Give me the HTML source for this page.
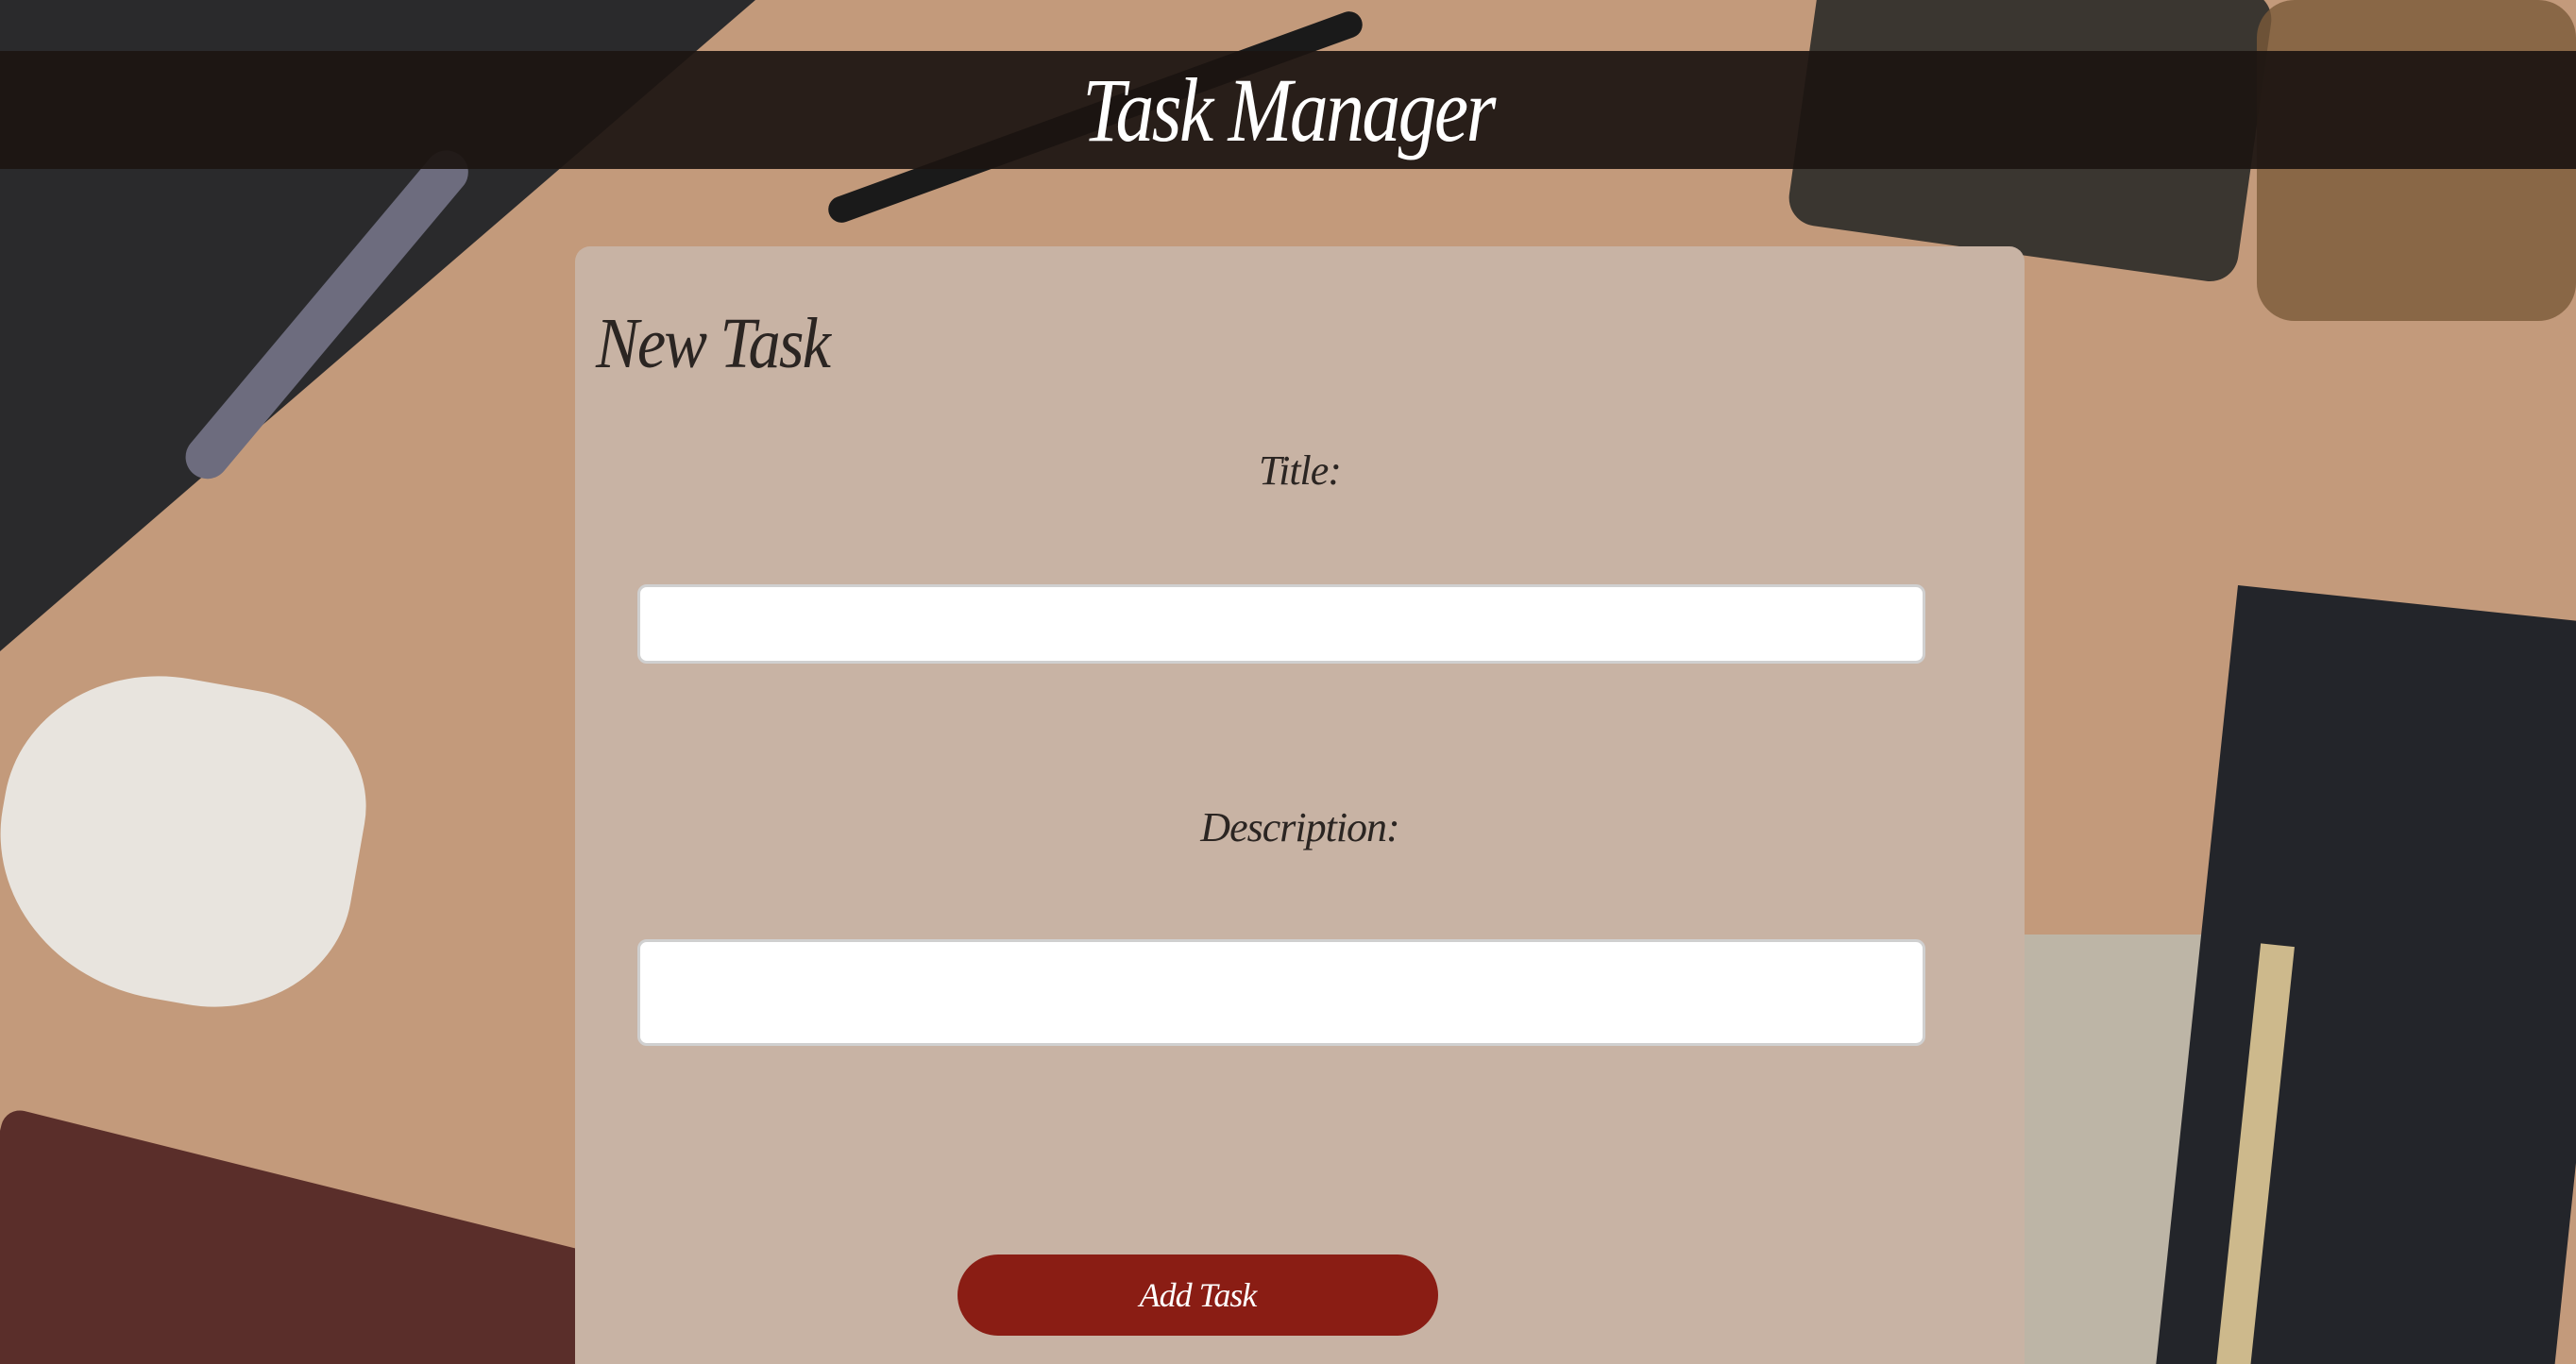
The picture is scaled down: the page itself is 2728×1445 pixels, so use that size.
<!DOCTYPE html>
<html><head><meta charset="utf-8"><style>
html,body{margin:0;padding:0;width:2728px;height:1445px;overflow:hidden}
body{background:#c39a7b;position:relative;font-family:"Liberation Serif",serif;font-style:italic}
.bg{position:absolute;left:0;top:0;width:2728px;height:1445px;overflow:hidden}
.s{position:absolute}
.hdr{position:absolute;left:0;top:54px;width:2728px;height:125px;background:rgba(28,20,17,0.93);text-align:center}
.hdr h1{margin:0;color:#fff;font-weight:normal;font-size:96px;line-height:125px;letter-spacing:-3px;transform:scaleX(0.85);transform-origin:center}
.card{position:absolute;left:609px;top:261px;width:1535px;height:1184px;background:#c8b3a4;border-radius:16px 16px 0 0}
.card h2{position:absolute;left:22px;top:60px;margin:0;font-weight:normal;font-size:76px;color:#2b2522;letter-spacing:-2px;transform:scaleX(0.9);transform-origin:left}
.lbl{position:absolute;width:100%;text-align:center;font-size:44px;color:#2b2522;left:0;letter-spacing:-1px}
.inp{position:absolute;left:66px;width:1358px;background:#fff;border:3px solid #d0d0d0;border-radius:10px}
.btn{position:absolute;left:405px;top:1068px;width:509px;height:86px;background:#8a1d14;border-radius:43px;color:#fff;text-align:center;line-height:86px;font-size:36px;letter-spacing:-1px}
</style></head><body>
<div class="bg">
<div class="s" style="left:0;top:0;width:820px;height:700px;background:#2a2a2c;clip-path:polygon(0 0,800px 0,0 690px)"></div>
<div class="s" style="left:470px;top:150px;width:46px;height:440px;background:#6d6c7e;transform:rotate(40deg);border-radius:23px;transform-origin:top left"></div>
<div class="s" style="left:1910px;top:-40px;width:480px;height:310px;background:#3a3630;border-radius:30px;transform:rotate(8deg)"></div>
<div class="s" style="left:2390px;top:0px;width:338px;height:340px;background:#7a5a3a;border-radius:40px;opacity:.8"></div>
<div class="s" style="left:0;top:720px;width:380px;height:340px;background:#e8e4de;border-radius:45% 35% 40% 50%;transform:rotate(10deg)"></div>
<div class="s" style="left:-40px;top:1250px;width:680px;height:300px;background:#5a2e2a;transform:rotate(14deg);border-radius:20px"></div>
<div class="s" style="left:2130px;top:990px;width:300px;height:460px;background:#bdb5a6"></div>
<div class="s" style="left:2370px;top:620px;width:420px;height:900px;background:#23252a;transform:rotate(6deg);transform-origin:top left"></div>
<div class="s" style="left:2370px;top:1000px;width:36px;height:460px;background:#cdb98c;transform:rotate(6deg)"></div>
<div class="s" style="left:860px;top:110px;width:600px;height:28px;background:#1a1a1a;transform:rotate(-20deg);border-radius:14px"></div>
</div>
<div class="hdr"><h1>Task Manager</h1></div>
<div class="card">
<h2>New Task</h2>
<div class="lbl" style="top:212px">Title:</div>
<div class="inp" style="top:358px;height:78px"></div>
<div class="lbl" style="top:590px">Description:</div>
<div class="inp" style="top:734px;height:107px"></div>
<div class="btn">Add Task</div>
</div>
</body></html>
